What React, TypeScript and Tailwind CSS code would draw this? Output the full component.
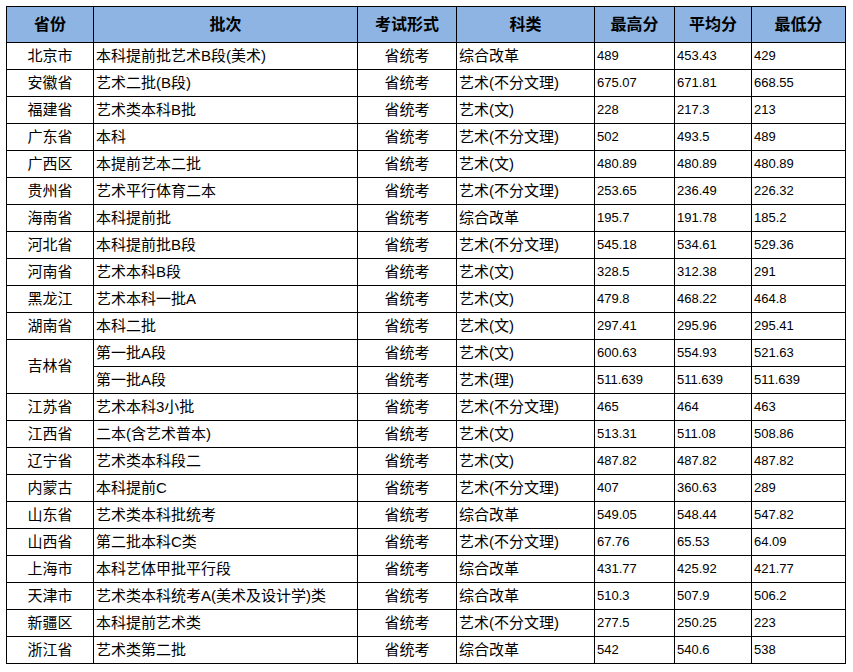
import React from 'react';

type Row = {
  province: string;
  batch: string;
  form: string;
  category: string;
  max: string;
  avg: string;
  min: string;
  span?: number;
  skipProvince?: boolean;
};

const rows: Row[] = [
  { province: '北京市', batch: '本科提前批艺术B段(美术)', form: '省统考', category: '综合改革', max: '489', avg: '453.43', min: '429' },
  { province: '安徽省', batch: '艺术二批(B段)', form: '省统考', category: '艺术(不分文理)', max: '675.07', avg: '671.81', min: '668.55' },
  { province: '福建省', batch: '艺术类本科B批', form: '省统考', category: '艺术(文)', max: '228', avg: '217.3', min: '213' },
  { province: '广东省', batch: '本科', form: '省统考', category: '艺术(不分文理)', max: '502', avg: '493.5', min: '489' },
  { province: '广西区', batch: '本提前艺本二批', form: '省统考', category: '艺术(文)', max: '480.89', avg: '480.89', min: '480.89' },
  { province: '贵州省', batch: '艺术平行体育二本', form: '省统考', category: '艺术(不分文理)', max: '253.65', avg: '236.49', min: '226.32' },
  { province: '海南省', batch: '本科提前批', form: '省统考', category: '综合改革', max: '195.7', avg: '191.78', min: '185.2' },
  { province: '河北省', batch: '本科提前批B段', form: '省统考', category: '艺术(不分文理)', max: '545.18', avg: '534.61', min: '529.36' },
  { province: '河南省', batch: '艺术本科B段', form: '省统考', category: '艺术(文)', max: '328.5', avg: '312.38', min: '291' },
  { province: '黑龙江', batch: '艺术本科一批A', form: '省统考', category: '艺术(文)', max: '479.8', avg: '468.22', min: '464.8' },
  { province: '湖南省', batch: '本科二批', form: '省统考', category: '艺术(文)', max: '297.41', avg: '295.96', min: '295.41' },
  { province: '吉林省', batch: '第一批A段', form: '省统考', category: '艺术(文)', max: '600.63', avg: '554.93', min: '521.63', span: 2 },
  { province: '', batch: '第一批A段', form: '省统考', category: '艺术(理)', max: '511.639', avg: '511.639', min: '511.639', skipProvince: true },
  { province: '江苏省', batch: '艺术本科3小批', form: '省统考', category: '艺术(不分文理)', max: '465', avg: '464', min: '463' },
  { province: '江西省', batch: '二本(含艺术普本)', form: '省统考', category: '艺术(文)', max: '513.31', avg: '511.08', min: '508.86' },
  { province: '辽宁省', batch: '艺术类本科段二', form: '省统考', category: '艺术(文)', max: '487.82', avg: '487.82', min: '487.82' },
  { province: '内蒙古', batch: '本科提前C', form: '省统考', category: '艺术(不分文理)', max: '407', avg: '360.63', min: '289' },
  { province: '山东省', batch: '艺术类本科批统考', form: '省统考', category: '综合改革', max: '549.05', avg: '548.44', min: '547.82' },
  { province: '山西省', batch: '第二批本科C类', form: '省统考', category: '艺术(不分文理)', max: '67.76', avg: '65.53', min: '64.09' },
  { province: '上海市', batch: '本科艺体甲批平行段', form: '省统考', category: '综合改革', max: '431.77', avg: '425.92', min: '421.77' },
  { province: '天津市', batch: '艺术类本科统考A(美术及设计学)类', form: '省统考', category: '综合改革', max: '510.3', avg: '507.9', min: '506.2' },
  { province: '新疆区', batch: '本科提前艺术类', form: '省统考', category: '艺术(不分文理)', max: '277.5', avg: '250.25', min: '223' },
  { province: '浙江省', batch: '艺术类第二批', form: '省统考', category: '综合改革', max: '542', avg: '540.6', min: '538' },
];

const headers = ['省份', '批次', '考试形式', '科类', '最高分', '平均分', '最低分'];
const widths = ['w-[87px]', 'w-[264px]', 'w-[99px]', 'w-[138px]', 'w-[80px]', 'w-[77px]', 'w-[94px]'];

const cjk = "font-['Liberation_Sans','Noto_Sans_CJK_SC',sans-serif]";

export default function App() {
  return (
    <div className="min-h-screen bg-white p-[6px]">
      <table className={`table-fixed border-collapse border border-black text-black ${cjk}`}>
        <colgroup>
          {widths.map((w) => (
            <col key={w} className={w} />
          ))}
        </colgroup>
        <thead>
          <tr className="h-[36px] bg-[#8db4e2]">
            {headers.map((h) => (
              <th key={h} className="border border-black p-0 text-center text-[16px] font-bold">
                {h}
              </th>
            ))}
          </tr>
        </thead>
        <tbody>
          {rows.map((r, i) => (
            <tr key={i} className="h-[27px]">
              {!r.skipProvince && (
                <td rowSpan={r.span} className="border border-black p-0 text-center text-[15px]">
                  {r.province}
                </td>
              )}
              <td className="border border-black py-0 pl-[2px] text-left text-[15px] whitespace-nowrap">
                {r.batch}
              </td>
              <td className="border border-black p-0 text-center text-[15px]">{r.form}</td>
              <td className="border border-black py-0 pl-[2px] text-left text-[15px] whitespace-nowrap">
                {r.category}
              </td>
              <td className="border border-black py-0 pl-[2px] text-left text-[13px] font-['Liberation_Sans',sans-serif]">
                {r.max}
              </td>
              <td className="border border-black py-0 pl-[2px] text-left text-[13px] font-['Liberation_Sans',sans-serif]">
                {r.avg}
              </td>
              <td className="border border-black py-0 pl-[2px] text-left text-[13px] font-['Liberation_Sans',sans-serif]">
                {r.min}
              </td>
            </tr>
          ))}
        </tbody>
      </table>
    </div>
  );
}
